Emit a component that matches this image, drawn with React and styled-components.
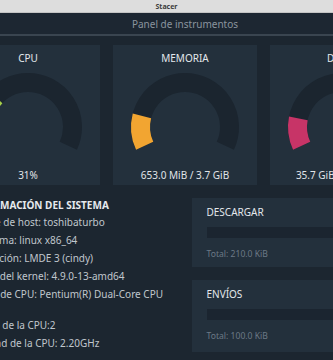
import React from "react";
import styled, { createGlobalStyle } from "styled-components";

const GlobalStyle = createGlobalStyle`
  html, body {
    margin: 0;
    padding: 0;
    background: #1c2630;
    overflow: hidden;
    font-family: "Noto Sans", "DejaVu Sans", sans-serif;
  }
  #root { width: 333px; height: 360px; overflow: hidden; }
`;

const Window = styled.div`
  width: 333px;
  height: 360px;
  overflow: hidden;
  display: flex;
  flex-direction: column;
  background: #1c2630;
`;

const TitleBar = styled.div`
  height: 13px;
  flex: none;
  background: #dddddd;
  display: flex;
  align-items: center;
  justify-content: center;
  font-size: 7px;
  font-weight: 700;
  color: #3d3d3d;
  border-bottom: 1px solid #c4c4c4;
  box-sizing: border-box;
`;

const App = styled.div`
  width: 498px;
  margin-left: -64px;
  display: flex;
  flex-direction: column;
`;

const Header = styled.div`
  height: 21px;
  background: #1d2732;
  border-bottom: 2px solid #3a4550;
  display: flex;
  align-items: center;
  justify-content: center;
  font-size: 10px;
  color: #8a949e;
`;

const Content = styled.div`
  padding: 9px 20px 0;
  display: flex;
  flex-direction: column;
  gap: 13px;
`;

const GaugeRow = styled.div`
  display: grid;
  grid-template-columns: repeat(3, 144px);
  gap: 13px;
`;

const Panel = styled.div`
  background: #23303c;
  display: flex;
  flex-direction: column;
  align-items: center;
  padding: 6px 0 3px;
  height: 140px;
  box-sizing: border-box;
`;

const PanelTitle = styled.div`
  font-size: 10px;
  line-height: 14px;
  color: #e4e8ec;
`;

const GaugeSvg = styled.svg`
  display: block;
  margin-bottom: 15px;
`;

const PanelValue = styled.div`
  font-size: 10px;
  line-height: 14px;
  color: #e0e4e8;
  white-space: nowrap;
`;

const BottomGrid = styled.div`
  display: grid;
  grid-template-columns: 1fr 1fr;
  gap: 13px;
`;

const InfoColumn = styled.div`
  padding-left: 6px;
  display: flex;
  flex-direction: column;
`;

const InfoHeading = styled.div`
  font-size: 10px;
  line-height: 14px;
  font-weight: 700;
  color: #e6eaee;
  padding-left: 6px;
  margin-bottom: 1px;
  white-space: nowrap;
`;

const InfoLine = styled.div`
  font-size: 10px;
  line-height: 18px;
  color: #c0c7cd;
  white-space: nowrap;
  margin-top: ${(p) => (p.$spaced ? "13px" : "0")};
`;

const NetColumn = styled.div`
  display: flex;
  flex-direction: column;
  gap: 13px;
`;

const NetPanel = styled.div`
  background: #23303c;
  padding: 7px 16px 7px 15px;
  display: flex;
  flex-direction: column;
  flex: ${(p) => (p.$grow ? 1 : "none")};
`;

const NetTitle = styled.div`
  font-size: 10px;
  line-height: 14px;
  color: #e4e8ec;
  margin-bottom: 8px;
`;

const NetBar = styled.div`
  height: 11px;
  background: #1b2530;
  margin-bottom: 10px;
`;

const NetTotal = styled.div`
  font-size: 8.6px;
  line-height: 12px;
  color: #6c7986;
`;

const START = 155;
const SWEEP = 230;

function polar(cx, cy, r, deg) {
  const a = (deg * Math.PI) / 180;
  return [cx + r * Math.cos(a), cy + r * Math.sin(a)];
}

function arc(cx, cy, r, a0, a1) {
  const [x0, y0] = polar(cx, cy, r, a0);
  const [x1, y1] = polar(cx, cy, r, a1);
  const large = a1 - a0 > 180 ? 1 : 0;
  return `M ${x0.toFixed(2)} ${y0.toFixed(2)} A ${r} ${r} 0 ${large} 1 ${x1.toFixed(2)} ${y1.toFixed(2)}`;
}

function Gauge({ pct, color }) {
  const cx = 72;
  const cy = 62;
  const r = 44.5;
  const sw = 19;
  return (
    <GaugeSvg width="144" height="88" viewBox="0 0 144 88">
      <path d={arc(cx, cy, r, START, START + SWEEP)} fill="none" stroke="#1b252f" strokeWidth={sw} />
      <path d={arc(cx, cy, r, START, START + SWEEP * pct)} fill="none" stroke={color} strokeWidth={sw} />
    </GaugeSvg>
  );
}

const gauges = [
  { title: "CPU", pct: 0.295, color: "#a6d04a", value: "31%" },
  { title: "MEMORIA", pct: 0.172, color: "#f2a531", value: "653.0 MiB / 3.7 GiB" },
  { title: "DISCO", pct: 0.157, color: "#c73467", value: "35.7 GiB / 227.7 GiB" },
];

const info = [
  "Nombre de host: toshibaturbo",
  "Plataforma: linux x86_64",
  "Distribución: LMDE 3 (cindy)",
  "Versión del kernel: 4.9.0-13-amd64",
  "Modelo de CPU: Pentium(R) Dual-Core CPU",
];

export default function AppRoot() {
  return (
    <>
      <GlobalStyle />
      <Window>
        <TitleBar>Stacer</TitleBar>
        <App>
          <Header>Panel de instrumentos</Header>
          <Content>
            <GaugeRow>
              {gauges.map((g) => (
                <Panel key={g.title}>
                  <PanelTitle>{g.title}</PanelTitle>
                  <Gauge pct={g.pct} color={g.color} />
                  <PanelValue>{g.value}</PanelValue>
                </Panel>
              ))}
            </GaugeRow>
            <BottomGrid>
              <InfoColumn>
                <InfoHeading>INFORMACIÓN DEL SISTEMA</InfoHeading>
                {info.map((t) => (
                  <InfoLine key={t}>{t}</InfoLine>
                ))}
                <InfoLine $spaced>Núcleos de la CPU:2</InfoLine>
                <InfoLine>Velocidad de la CPU: 2.20GHz</InfoLine>
              </InfoColumn>
              <NetColumn>
                <NetPanel>
                  <NetTitle>DESCARGAR</NetTitle>
                  <NetBar />
                  <NetTotal>Total: 210.0 KiB</NetTotal>
                </NetPanel>
                <NetPanel $grow>
                  <NetTitle>ENVÍOS</NetTitle>
                  <NetBar />
                  <NetTotal>Total: 100.0 KiB</NetTotal>
                </NetPanel>
              </NetColumn>
            </BottomGrid>
          </Content>
        </App>
      </Window>
    </>
  );
}
